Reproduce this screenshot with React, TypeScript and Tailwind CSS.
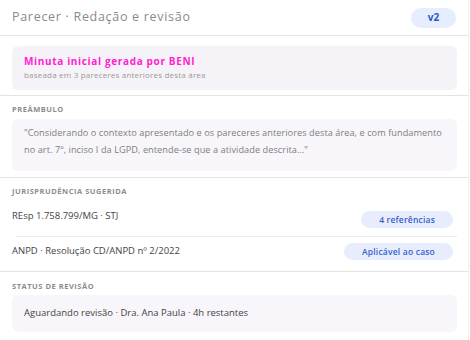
import React from 'react'

const Label = ({ children }: { children: React.ReactNode }) => (
	<p className="text-[7.5px] leading-[11px] font-bold tracking-[0.07em] uppercase text-[#8c8c8c]">{children}</p>
)

const Pill = ({ children }: { children: React.ReactNode }) => (
	<span className="rounded-full bg-[#e7edfc] text-[#3461d1] text-[8.5px] font-semibold px-[18px] py-[3px] leading-[11px] tracking-[0.2px]">{children}</span>
)

const App = () => {
	return (
		<div className="w-[470px] h-[340px] bg-white overflow-hidden font-['Open_Sans',sans-serif]">
			<div className="w-[469px] border-r border-[#f0f0f0] h-full">
				<div className="flex items-center justify-between h-[36px] pl-3 pr-3 border-b border-[#e3e3e3]">
					<h1 className="text-[12.5px] text-[#8a8a8a] tracking-[0.7px]">Parecer · Redação e revisão</h1>
					<span className="rounded-full bg-[#e6edfc] text-[#2a56cc] text-[10px] font-bold w-[45px] h-[20px] flex items-center justify-center">v2</span>
				</div>

				<div className="px-3 pt-[10px] pb-[5px] border-b border-[#e3e3e3]">
					<div className="rounded-md bg-[#f5f3f7] pl-3 pt-[9px] h-[44px] w-[445px]">
						<p className="text-[10px] font-bold text-[#ff22d3] leading-[12px] tracking-[0.65px]">Minuta inicial gerada por BENI</p>
						<p className="text-[8px] text-[#9a9a9a] mt-[3px] leading-[10px] tracking-[0.2px]">baseada em 3 pareceres anteriores desta área</p>
					</div>
				</div>

				<div className="px-3 pt-[8px] pb-[6px] border-b border-[#e3e3e3]">
					<Label>Preâmbulo</Label>
					<div className="mt-[4px] rounded-md bg-[#f8f6fb] px-3 pt-[5px] h-[52px] w-[445px]">
						<p className="text-[9.2px] text-[#7e7e7e] leading-[17px] tracking-[0.05px]">
							"Considerando o contexto apresentado e os pareceres anteriores desta área, e com fundamento no art. 7º, inciso I da LGPD, entende-se que a atividade descrita..."
						</p>
					</div>
				</div>

				<div className="px-3 pt-[8px] pb-[5px] border-b border-[#e3e3e3]">
					<Label>Jurisprudência sugerida</Label>
					<div className="flex items-center justify-between h-[40px] ml-[4px] -mr-[1px] border-b border-[#ececec]">
						<span className="-ml-[4px] text-[9.5px] text-[#444]">REsp 1.758.799/MG · STJ</span>
						<span className="mr-[4px]"><Pill>4 referências</Pill></span>
					</div>
					<div className="flex items-center justify-between h-[29px] mr-[3px]">
						<span className="text-[9.5px] text-[#444]">ANPD · Resolução CD/ANPD nº 2/2022</span>
						<Pill>Aplicável ao caso</Pill>
					</div>
				</div>

				<div className="px-3 pt-[9px]">
					<Label>Status de revisão</Label>
					<div className="mt-[3px] rounded-md bg-[#f8f6fa] pl-3 h-[37px] w-[445px] flex items-center">
						<span className="text-[9.5px] text-[#444]">Aguardando revisão · Dra. Ana Paula · 4h restantes</span>
					</div>
				</div>
			</div>
		</div>
	)
}

export default App
